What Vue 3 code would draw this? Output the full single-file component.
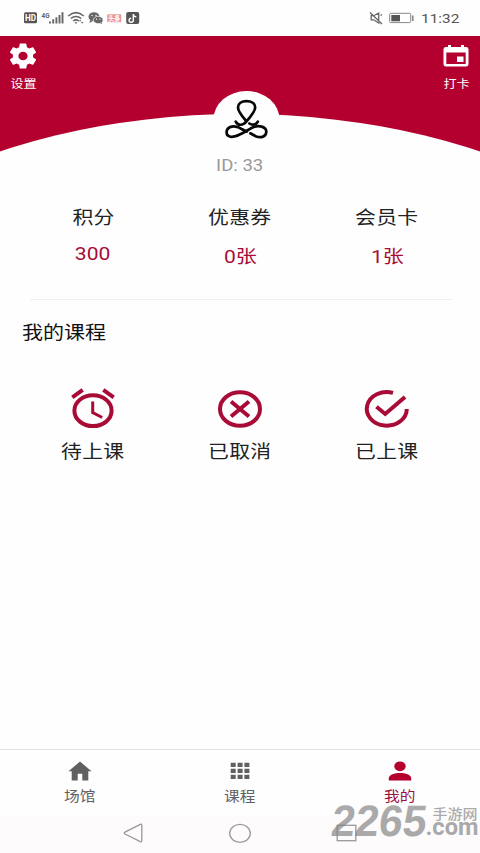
<script setup>
const stats = [
  { label: '积分', value: '300', plain: true },
  { label: '优惠券', value: '0张' },
  { label: '会员卡', value: '1张' },
]
const courses = [
  { label: '待上课', icon: 'alarm' },
  { label: '已取消', icon: 'cancel' },
  { label: '已上课', icon: 'done' },
]
const tabs = [
  { label: '场馆', icon: 'home' },
  { label: '课程', icon: 'grid' },
  { label: '我的', icon: 'user', active: true },
]
</script>

<template>
  <div class="screen">
    <header class="status">
      <svg class="status-left" width="120" height="16" viewBox="0 0 120 16">
        <rect x="0" y="2.300" width="13" height="11" rx="1.5" fill="#555" />
        <text x="1" y="11" class="hd" textLength="11" lengthAdjust="spacingAndGlyphs">HD</text>
        <text x="17.500" y="7.500" class="net" textLength="8" lengthAdjust="spacingAndGlyphs">4G</text>
        <path d="M26 13.500v-2M29.200 13.500v-4.200M32.400 13.500V7.300M35.500 13.500V5M38.500 13.500V2.200" stroke="#666" stroke-width="1.900" />
        <g fill="none" stroke="#666" stroke-width="1.5">
          <path d="M44.2 6Q52 -.8 59.8 6M46.7 8.5q5.3-4.2 10.6 0M49.2 11q2.8-2.3 5.6 0" />
        </g>
        <path d="M50.5 12.2h3L52 14zM55 11.2l1.2-1.7 1.2 1.7zM57 12h2.4l-1.2 1.7z" fill="#666" />
        <ellipse cx="70" cy="6.7" rx="5.5" ry="4.5" fill="#666" />
        <path d="M66 10l-.5 3 3-1.7z" fill="#666" />
        <ellipse cx="74.2" cy="10" rx="4.9" ry="3.7" fill="#666" stroke="#fff" stroke-width=".7" />
        <path d="M76 13l2 1.2-.3-2z" fill="#666" />
        <g fill="#fff"><circle cx="68" cy="5.5" r=".7" /><circle cx="72" cy="5.5" r=".7" /><circle cx="72.6" cy="9.2" r=".6" /><circle cx="76" cy="9.2" r=".6" /></g>
        <rect x="83.2" y="4.2" width="14" height="8" rx=".8" fill="#e79696" />
        <text x="84.2" y="10.6" class="news" textLength="12" lengthAdjust="spacingAndGlyphs">头条</text>
        <rect x="102.2" y="2" width="13" height="12" rx="2" fill="#555" />
        <path d="M109.3 4v6.3a2.1 2 0 1 1-2.1-2M109.3 4.3q.5 2.4 3 2.5" fill="none" stroke="#fff" stroke-width="1.4" />
      </svg>
      <div class="status-right">
        <svg width="46" height="16" viewBox="0 0 46 16" fill="none">
          <path d="M3.200 5.700h2.500l5-2.700v10l-5-3.200H3.200zM2 2.500l12 11.500M12.500 5.500l1.500-1" stroke="#666" stroke-width="1.300" />
          <rect x="21.700" y="3.300" width="21" height="9.300" rx="1" stroke="#888" />
          <path d="M23.300 5h8.700v6.300h-8.700z" fill="#555" />
          <path d="M44.800 5.500v5.500" stroke="#777" stroke-width="1.400" />
        </svg>
        <span class="time wide">11:32</span>
      </div>
    </header>

    <section class="hero">
      <svg class="arc" width="480" height="116" viewBox="0 36 480 116">
        <path d="M0 36h480v116H0z" fill="#b4002e" />
        <ellipse cx="240" cy="394" rx="480" ry="280" fill="#fefefe" />
        <ellipse cx="246.5" cy="119.5" rx="33" ry="28.5" fill="#fefefe" />
        <g fill="none" stroke="#080808" stroke-width="2.7" stroke-linecap="round" stroke-linejoin="round">
          <path d="M235.700 121.600C238 126 243 125.700 246.500 121.400C252 115 255.200 111 255.200 107.400C255.200 103.500 251.500 101.200 246.500 101.200C241.500 101.200 238 103.500 238 107.400C238 111 241 115 246.200 121" />
          <path d="M249.400 123.500C252.500 125.700 256 124.700 257.800 121.700" />
          <path d="M242.500 129.500C238.500 126.600 234.500 126 231.700 126.600C225.300 128 225 135.500 230.500 136.700C236.500 138 246 131 251.500 128C259 124 266.500 127 266.300 132C266 137.500 260 138 255.700 136.200L250.300 133.300" />
          <path d="M242.500 129.500l4.300 2" />
        </g>
      </svg>
      <button class="action settings">
        <svg width="28" height="26" viewBox="2 2 20 20" preserveAspectRatio="none" fill="#fff">
          <path d="M19.14 12.94c.04-.3.06-.61.06-.94s-.02-.64-.07-.94l2.03-1.58a.49.49 0 0 0 .12-.61l-1.92-3.32a.49.49 0 0 0-.59-.22l-2.39.96a7 7 0 0 0-1.62-.94l-.36-2.54A.48.48 0 0 0 13.92 2.4h-3.84a.47.47 0 0 0-.47.41l-.36 2.54a7 7 0 0 0-1.62.94l-2.39-.96a.48.48 0 0 0-.59.22L2.74 8.87a.47.47 0 0 0 .12.61l2.03 1.58a7 7 0 0 0 0 1.88l-2.03 1.58a.49.49 0 0 0-.12.61l1.92 3.32c.12.22.37.29.59.22l2.39-.96c.5.38 1.03.7 1.62.94l.36 2.54c.05.24.24.41.48.41h3.84c.24 0 .44-.17.47-.41l.36-2.54a7 7 0 0 0 1.62-.94l2.39.96c.22.08.47 0 .59-.22l1.92-3.32a.47.47 0 0 0-.12-.61zM12 15.3a3.3 3.3 0 1 1 0-6.6 3.3 3.3 0 0 1 0 6.6z" />
        </svg>
        <span class="wide">设置</span>
      </button>
      <button class="action checkin">
        <svg width="28" height="26" viewBox="0 0 28 26">
          <path d="M6 2h3v2h10V2h3v2h2q2.500 0 2.500 2.300v15q0 2.300-2.500 2.300H4q-2.500 0-2.500-2.300v-15Q1.500 4 4 4h2zM4.300 9.500v11.600h19.400V9.500z" fill="#fff" fill-rule="evenodd" />
          <path d="M15 13.500h6.500V19H15z" fill="#fff" />
        </svg>
        <span class="wide">打卡</span>
      </button>
    </section>

    <p class="uid"><span class="wide">ID: 33</span></p>

    <section class="row stats">
      <div v-for="s in stats" :key="s.label" class="cell">
        <span class="label wide">{{ s.label }}</span>
        <span class="value wide" :class="{ plain: s.plain }">{{ s.value }}</span>
      </div>
    </section>
    <div class="divider"></div>
    <h2 class="title"><span>我的课程</span></h2>

    <section class="row courses">
      <div v-for="c in courses" :key="c.label" class="cell">
        <svg width="48" height="42" viewBox="0 0 48 42" fill="none" stroke="#a80c36" stroke-width="4">
          <template v-if="c.icon === 'alarm'">
            <ellipse cx="24" cy="22.700" rx="18.600" ry="15.400" />
            <path d="M3.300 9.300l10.400-7.400M44.700 9.300L34.300 1.900" />
            <path d="M23.700 13.500v11l9.500 5" stroke-width="3" />
          </template>
          <template v-else-if="c.icon === 'cancel'">
            <ellipse cx="24" cy="21" rx="20" ry="16.800" />
            <path d="M15 13.500l18 15M33 13.500l-18 15" />
          </template>
          <template v-else>
            <path d="M30 4.900A20 16.800 0 1 0 43.800 21" />
            <path d="M13.500 18.800l8.700 7.200L42 9" />
          </template>
        </svg>
        <span class="label wide">{{ c.label }}</span>
      </div>
    </section>

    <nav class="tabs">
      <div v-for="t in tabs" :key="t.label" class="tab" :class="{ active: t.active }">
        <svg width="24" height="22" viewBox="0 0 24 22" fill="currentColor">
          <path v-if="t.icon === 'home'" d="M12 1.500l11.500 9.700h-3.200v9.300h-6v-6.700H9.700v6.700h-6v-9.300H.5z" />
          <path v-else-if="t.icon === 'grid'" d="M2.700 2.700h5v4.300h-5zM9.600 2.700h5v4.300h-5zM16.400 2.700h5v4.300h-5zM2.700 8.700h5v4.300h-5zM9.600 8.700h5v4.300h-5zM16.400 8.700h5v4.300h-5zM2.700 14.700h5v4.300h-5zM9.600 14.700h5v4.300h-5zM16.400 14.700h5v4.300h-5z" />
          <g v-else><ellipse cx="12" cy="6.300" rx="5.700" ry="4.900" /><path d="M.8 20.400v-2.200c0-3.500 6-5.200 11.200-5.200s11.200 1.700 11.200 5.200v2.200z" /></g>
        </svg>
        <span class="wide">{{ t.label }}</span>
      </div>
    </nav>

    <footer class="system">
      <svg width="480" height="37" viewBox="0 816 480 37" fill="none" stroke="#999" stroke-width="1.300">
        <path d="M140.300 824.300q1.500-.7 1.500 1v15.300q0 1.700-1.500 1l-15.300-7.600q-1.600-1 0-1.900z" />
        <ellipse cx="240" cy="833.300" rx="10.300" ry="9" />
        <rect x="337.200" y="825.300" width="18.600" height="15.400" />
      </svg>
    </footer>

    <svg class="watermark" width="154" height="54" viewBox="326 796 154 54">
      <text x="0" y="0" transform="translate(330 836) skewX(-7)" class="wm-number" textLength="95" lengthAdjust="spacingAndGlyphs">2265</text>
      <text x="425.500" y="835" class="wm-domain" textLength="53" lengthAdjust="spacingAndGlyphs">.com</text>
      <text x="432.500" y="819" class="wm-name" textLength="45" lengthAdjust="spacingAndGlyphs">手游网</text>
    </svg>
  </div>
</template>

<style>
body { margin: 0; background: #fefefe; }
</style>

<style scoped>
.screen {
  position: relative;
  width: 480px;
  height: 853px;
  display: flex;
  flex-direction: column;
  overflow: hidden;
  background: #fefefe;
  color: #222;
  font-family: Roboto, "Noto Sans CJK SC", sans-serif;
}
svg { display: block; flex: none; }
.wide { display: block; transform: scaleX(1.14); white-space: nowrap; }
.status {
  box-sizing: border-box;
  height: 36px;
  padding: 10px 21px 0 24px;
  display: flex;
  justify-content: space-between;
  align-items: flex-start;
}
.status-right { display: flex; gap: 7px; }
.time { font-size: 13.500px; line-height: 16px; color: #555; transform-origin: left; width: 38px; }
.hd { font: bold 9px Roboto, sans-serif; fill: #fff; }
.net { font: bold 7px Roboto, sans-serif; fill: #666; }
.news { font: bold 6.500px "Noto Sans CJK SC", sans-serif; fill: #fff; }
.hero {
  position: relative;
  height: 116px;
  display: flex;
  justify-content: space-between;
  align-items: flex-start;
}
.arc { position: absolute; inset: 0; }
.action {
  position: relative;
  width: 46px;
  margin: 0;
  padding: 7px 0 0;
  border: 0;
  background: none;
  color: #fff;
  font: 11.500px/16px "Noto Sans CJK SC", sans-serif;
  display: flex;
  flex-direction: column;
  align-items: center;
  gap: 6px;
}
.checkin { width: 48px; }
.uid { margin: 4px 0 0; height: 20px; display: flex; justify-content: center; color: #999; font-size: 16.300px; line-height: 20px; }
.row { display: flex; padding: 0 19.500px; }
.cell { flex: 1; display: flex; flex-direction: column; align-items: center; }
.label { font-size: 18.300px; line-height: 26px; letter-spacing: .2px; }
.stats { margin-top: 29px; height: 94px; }
.value { margin-top: 13px; font-size: 18.500px; line-height: 26px; color: #a80c36; }
.value.plain { margin-top: 10px; }
.divider { margin: 0 28px 0 30px; height: 1px; background: #efefef; }
.title { margin: 19px 0 0 22px; height: 28px; font-size: 18.300px; line-height: 28px; font-weight: 400; color: #111; }
.title span { display: inline-block; transform: scaleX(1.150); transform-origin: left; }
.courses { margin-top: 41px; }
.courses .label { margin-top: 9px; }
.tabs {
  margin-top: auto;
  height: 66px;
  flex: none;
  border-top: 1px solid #e2e2e2;
  display: flex;
  color: #606060;
}
.tab { flex: 1; padding-top: 10px; display: flex; flex-direction: column; align-items: center; gap: 4px; font-size: 13.800px; line-height: 20px; }
.tab.active { color: #b4002e; }
.tab.active span { color: #9c1040; }
.system { height: 37px; flex: none; background: #fdfbfc; }
.watermark { position: absolute; right: 0; bottom: 3px; overflow: visible; fill: #808080; opacity: .66; }
.wm-number { font: bold 44px "Liberation Sans", sans-serif; }
.wm-domain { font: 700 23px Roboto, sans-serif; }
.wm-name { font: 500 14px "Noto Sans CJK SC", sans-serif; }
</style>
